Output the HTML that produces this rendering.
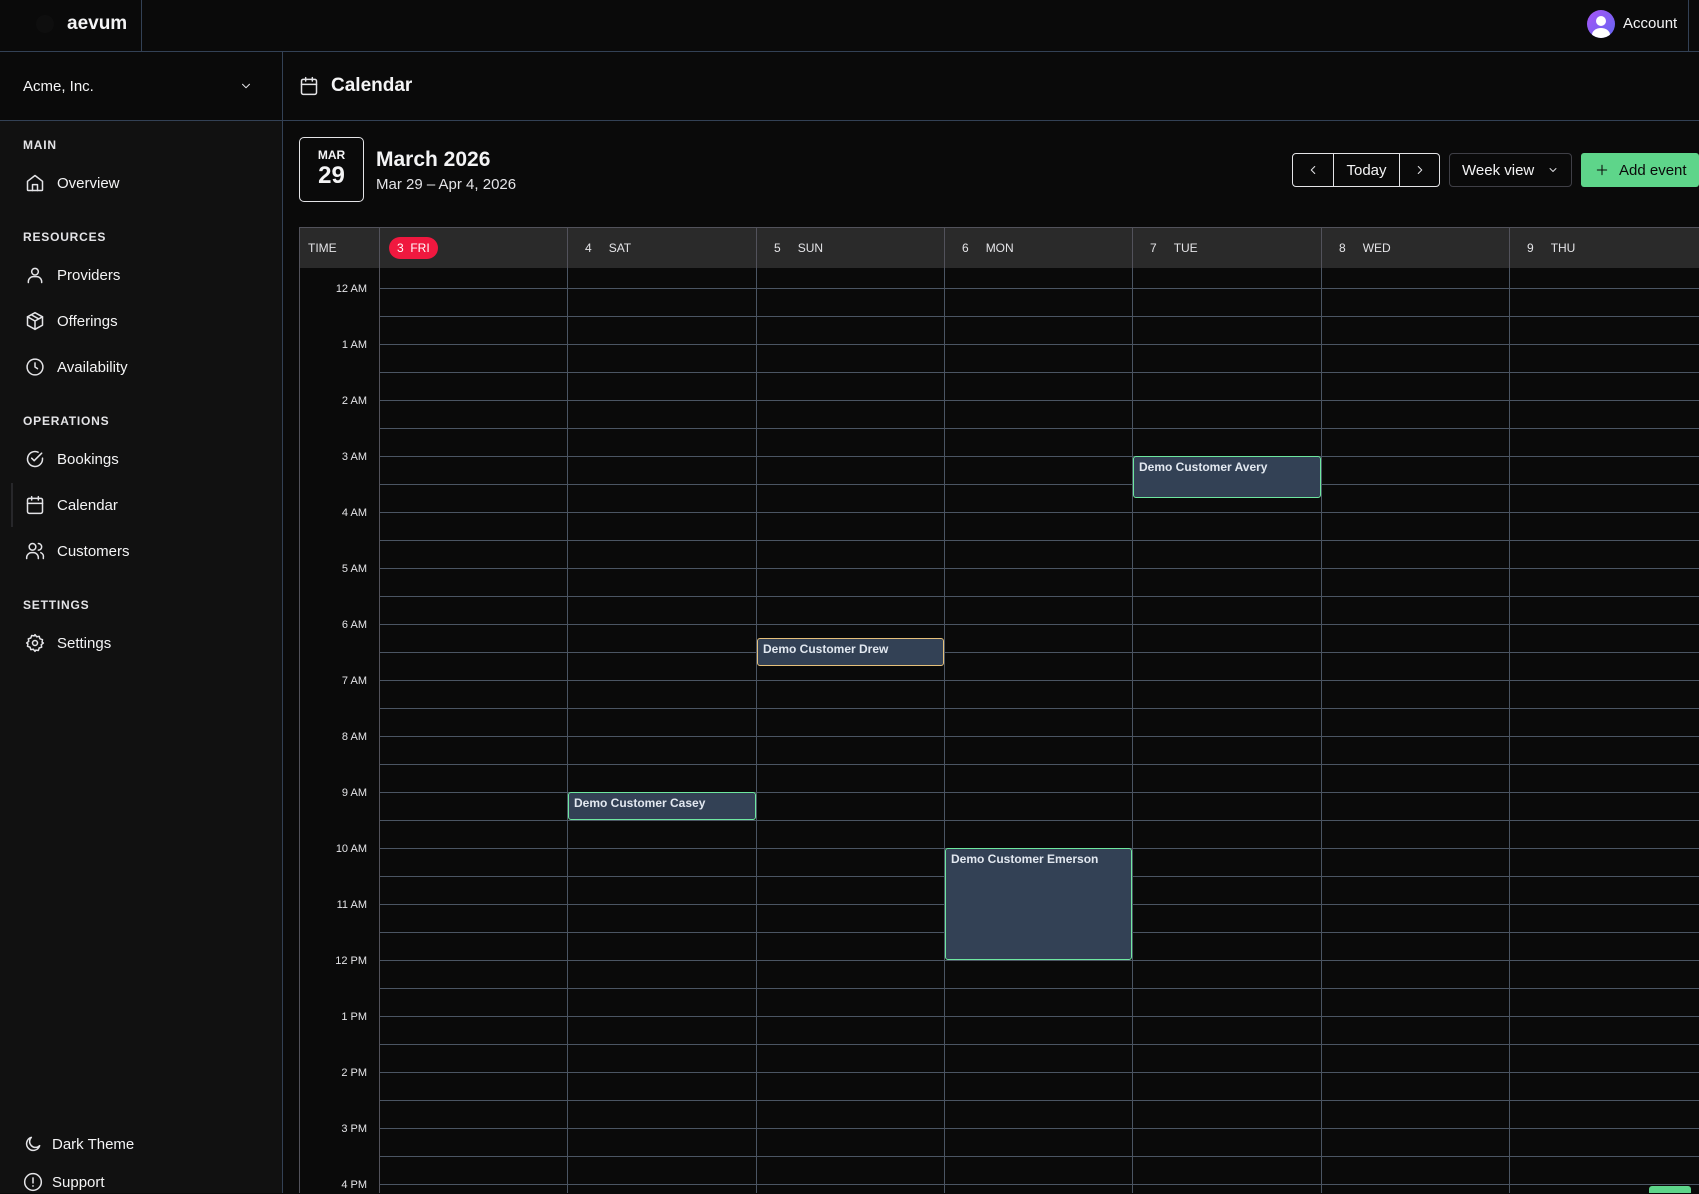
<!DOCTYPE html>
<html><head><meta charset="utf-8"><style>
*{box-sizing:border-box;margin:0;padding:0}
body{width:1699px;height:1193px;overflow:hidden;background:#0a0a0a;font-family:"Liberation Sans",sans-serif;color:#f4f4f5;position:relative}
.a{position:absolute}
.line{position:absolute;background:#334155}
svg{fill:none;stroke:#e4e4e7;stroke-width:1.8;stroke-linecap:round;stroke-linejoin:round}
.lab{position:absolute;left:23px;font-size:12px;font-weight:bold;letter-spacing:.8px;color:#e4e4e7}
.it{position:absolute;left:25px;height:24px;display:flex;align-items:center;font-size:15px;color:#f4f4f5}
.it svg{width:20px;height:20px;margin-right:12px}
.hd{position:absolute;top:227px;height:41px;display:flex;align-items:center;font-size:12px;color:#e4e4e7;border-left:1px solid #52525b}
.hd b{font-weight:normal;margin:0 17px 0 17px}
.tl{position:absolute;left:307px;font-size:11px;color:#e4e4e7;text-align:right;width:60px}
.ev{position:absolute;background:#334155;border:1px solid #6ee7a0;border-radius:3px;font-size:12px;font-weight:bold;color:#e2e8f0;padding:3px 5px}
</style></head><body>
<div class="a" style="left:0;top:0;width:1699px;height:51px;background:#0a0a0a"></div>
<div class="line" style="left:0;top:51px;width:1699px;height:1px"></div>
<div class="line" style="left:141px;top:0;width:1px;height:51px"></div>
<div class="line" style="left:1688px;top:0;width:1px;height:51px"></div>
<div class="a" style="left:36px;top:15px;width:18px;height:18px;border-radius:50%;background:#0e0e0e"></div>
<div class="a" style="left:67px;top:13px;font-size:19px;font-weight:bold">aevum</div>
<div class="a" style="left:1587px;top:10px;width:28px;height:28px;border-radius:50%;background:linear-gradient(135deg,#a855f7,#6366f1);overflow:hidden">
<div class="a" style="left:9px;top:6px;width:10px;height:10px;border-radius:50%;background:#fff"></div>
<div class="a" style="left:5px;top:18px;width:18px;height:14px;border-radius:50%;background:#fff"></div></div>
<div class="a" style="left:1623px;top:15px;font-size:15px">Account</div>
<div class="a" style="left:0;top:52px;width:282px;height:1141px;background:#111"></div>
<div class="a" style="left:0;top:52px;width:282px;height:68px;background:#0a0a0a"></div>
<div class="line" style="left:282px;top:52px;width:1px;height:1141px"></div>
<div class="line" style="left:0;top:120px;width:1699px;height:1px"></div>
<div class="a" style="left:23px;top:78px;font-size:15px">Acme, Inc.</div>
<svg class="a" style="left:239px;top:79px;width:14px;height:14px" viewBox="0 0 24 24"><path d="M6 9l6 6 6-6"/></svg>
<div class="lab" style="top:138px">MAIN</div>
<div class="it" style="top:171px"><svg viewBox="0 0 24 24"><path d="M3 10l9-7 9 7v10a1 1 0 0 1-1 1H4a1 1 0 0 1-1-1z"/><path d="M9 21v-7h6v7"/></svg>Overview</div>
<div class="lab" style="top:230px">RESOURCES</div>
<div class="it" style="top:263px"><svg viewBox="0 0 24 24"><circle cx="12" cy="8" r="4"/><path d="M4 21v-1a6 6 0 0 1 6-6h4a6 6 0 0 1 6 6v1"/></svg>Providers</div>
<div class="it" style="top:309px"><svg viewBox="0 0 24 24"><path d="M12 2l9 5v10l-9 5-9-5V7z"/><path d="M3 7l9 5 9-5M12 12v10M7.5 4.5l9 5"/></svg>Offerings</div>
<div class="it" style="top:355px"><svg viewBox="0 0 24 24"><circle cx="12" cy="12" r="9.5"/><path d="M12 7v5l3 2"/></svg>Availability</div>
<div class="lab" style="top:414px">OPERATIONS</div>
<div class="it" style="top:447px"><svg viewBox="0 0 24 24"><path d="M21 11v1a9 9 0 1 1-5.3-8.2"/><path d="M8 11l3 3 9-9"/></svg>Bookings</div>
<div class="a" style="left:11px;top:483px;width:2px;height:44px;background:#27272a"></div>
<div class="it" style="top:493px"><svg viewBox="0 0 24 24"><rect x="3" y="4" width="18" height="18" rx="2"/><path d="M3 10h18M8 2v4M16 2v4"/></svg>Calendar</div>
<div class="it" style="top:539px"><svg viewBox="0 0 24 24"><circle cx="9" cy="7" r="4"/><path d="M2 21v-1a6 6 0 0 1 6-6h2a6 6 0 0 1 6 6v1M16 3a4 4 0 0 1 0 8M19 14a5 5 0 0 1 3 6v1"/></svg>Customers</div>
<div class="lab" style="top:598px">SETTINGS</div>
<div class="it" style="top:631px"><svg viewBox="0 0 24 24"><circle cx="12" cy="12" r="3"/><path d="M12 2l2 2.5 3-.5 1 3 3 1-.5 3L22 12l-2.5 2 .5 3-3 1-1 3-3-.5L12 22l-2-2.5-3 .5-1-3-3-1 .5-3L2 12l2.5-2-.5-3 3-1 1-3 3 .5z"/></svg>Settings</div>
<div class="it" style="top:1132px;left:23px"><svg viewBox="0 0 24 24" style="margin-right:9px"><path d="M20 14A8 8 0 1 1 10 4a7 7 0 0 0 10 10z"/></svg>Dark Theme</div>
<div class="it" style="top:1170px;left:23px"><svg viewBox="0 0 24 24" style="margin-right:9px"><circle cx="12" cy="12" r="10"/><path d="M12 7v6M12 16.5v.5"/></svg>Support</div>
<svg class="a" style="left:299px;top:76px;width:20px;height:20px" viewBox="0 0 24 24"><rect x="3" y="4" width="18" height="18" rx="2"/><path d="M3 10h18M8 2v4M16 2v4"/></svg>
<div class="a" style="left:331px;top:75px;font-size:19px;font-weight:bold">Calendar</div>
<div class="a" style="left:299px;top:137px;width:65px;height:65px;border:1px solid #e4e4e7;border-radius:5px;text-align:center">
<div style="font-size:12px;font-weight:bold;margin-top:10px">MAR</div>
<div style="font-size:24px;font-weight:bold;line-height:28px">29</div></div>
<div class="a" style="left:376px;top:148px;font-size:21px;font-weight:bold">March 2026</div>
<div class="a" style="left:376px;top:176px;font-size:15px;color:#e4e4e7">Mar 29 – Apr 4, 2026</div>
<div class="a" style="left:1292px;top:153px;width:148px;height:34px;border:1px solid #e4e4e7;border-radius:4px;display:flex;font-size:15px">
<div style="width:41px;display:flex;align-items:center;justify-content:center;border-right:1px solid #e4e4e7"><svg style="width:14px;height:14px" viewBox="0 0 24 24"><path d="M15 6l-6 6 6 6"/></svg></div>
<div style="width:66px;display:flex;align-items:center;justify-content:center;border-right:1px solid #e4e4e7">Today</div>
<div style="flex:1;display:flex;align-items:center;justify-content:center"><svg style="width:14px;height:14px" viewBox="0 0 24 24"><path d="M9 6l6 6-6 6"/></svg></div></div>
<div class="a" style="left:1449px;top:153px;width:123px;height:34px;border:1px solid #3f3f46;border-radius:4px;display:flex;align-items:center;padding-left:12px;font-size:15px">Week view<svg style="width:12px;height:12px;margin-left:13px" viewBox="0 0 24 24"><path d="M6 9l6 6 6-6"/></svg></div>
<div class="a" style="left:1581px;top:153px;width:118px;height:34px;background:#5ed58a;border-radius:3px;display:flex;align-items:center;padding-left:14px;font-size:15px;color:#0a0a0a"><svg style="width:14px;height:14px;stroke:#0a0a0a;margin-right:10px" viewBox="0 0 24 24"><path d="M12 4v16M4 12h16"/></svg>Add event</div>
<div class="a" style="left:299px;top:227px;width:1400px;height:41px;background:#2a2a2a;border-top:1px solid #52525b"></div>
<div class="a" style="left:379px;top:268px;width:1320px;height:925px;background:repeating-linear-gradient(to bottom,transparent 0,transparent 20px,#4b5563 20px,#4b5563 21px,transparent 21px,transparent 28px)"></div>
<div class="a" style="left:379px;top:268px;width:1320px;height:21px;background:#0a0a0a"></div>
<div class="a" style="left:379px;top:288px;width:1320px;height:1px;background:#4b5563"></div>
<div class="a" style="left:299px;top:227px;width:1px;height:966px;background:#52525b"></div>
<div class="a" style="left:379px;top:227px;width:1px;height:966px;background:#52525b"></div>
<div class="a" style="left:567px;top:268px;width:1px;height:925px;background:#4b5563"></div>
<div class="a" style="left:756px;top:268px;width:1px;height:925px;background:#4b5563"></div>
<div class="a" style="left:944px;top:268px;width:1px;height:925px;background:#4b5563"></div>
<div class="a" style="left:1132px;top:268px;width:1px;height:925px;background:#4b5563"></div>
<div class="a" style="left:1321px;top:268px;width:1px;height:925px;background:#4b5563"></div>
<div class="a" style="left:1509px;top:268px;width:1px;height:925px;background:#4b5563"></div>
<div class="hd" style="left:299px;width:80px;border:none;padding-left:9px">TIME</div>
<div class="hd" style="left:379px;width:188px"><span style="background:#f0183f;color:#fff;border-radius:12px;padding:4px 8px;margin-left:9px">3 &nbsp;FRI</span></div>
<div class="hd" style="left:567px;width:189px"><b>4</b>SAT</div>
<div class="hd" style="left:756px;width:188px"><b>5</b>SUN</div>
<div class="hd" style="left:944px;width:188px"><b>6</b>MON</div>
<div class="hd" style="left:1132px;width:189px"><b>7</b>TUE</div>
<div class="hd" style="left:1321px;width:188px"><b>8</b>WED</div>
<div class="hd" style="left:1509px;width:190px"><b>9</b>THU</div>
<div class="tl" style="top:283px">12 AM</div>
<div class="tl" style="top:339px">1 AM</div>
<div class="tl" style="top:395px">2 AM</div>
<div class="tl" style="top:451px">3 AM</div>
<div class="tl" style="top:507px">4 AM</div>
<div class="tl" style="top:563px">5 AM</div>
<div class="tl" style="top:619px">6 AM</div>
<div class="tl" style="top:675px">7 AM</div>
<div class="tl" style="top:731px">8 AM</div>
<div class="tl" style="top:787px">9 AM</div>
<div class="tl" style="top:843px">10 AM</div>
<div class="tl" style="top:899px">11 AM</div>
<div class="tl" style="top:955px">12 PM</div>
<div class="tl" style="top:1011px">1 PM</div>
<div class="tl" style="top:1067px">2 PM</div>
<div class="tl" style="top:1123px">3 PM</div>
<div class="tl" style="top:1179px">4 PM</div>
<div class="ev" style="left:1133px;top:456px;width:188px;height:42px">Demo Customer Avery</div>
<div class="ev" style="left:757px;top:638px;width:187px;height:28px;border-color:#e5c07b">Demo Customer Drew</div>
<div class="ev" style="left:568px;top:792px;width:188px;height:28px">Demo Customer Casey</div>
<div class="ev" style="left:945px;top:848px;width:187px;height:112px">Demo Customer Emerson</div>
<div class="a" style="left:1649px;top:1186px;width:42px;height:7px;background:#5ed58a;border-radius:3px 3px 0 0"></div>
</body></html>
